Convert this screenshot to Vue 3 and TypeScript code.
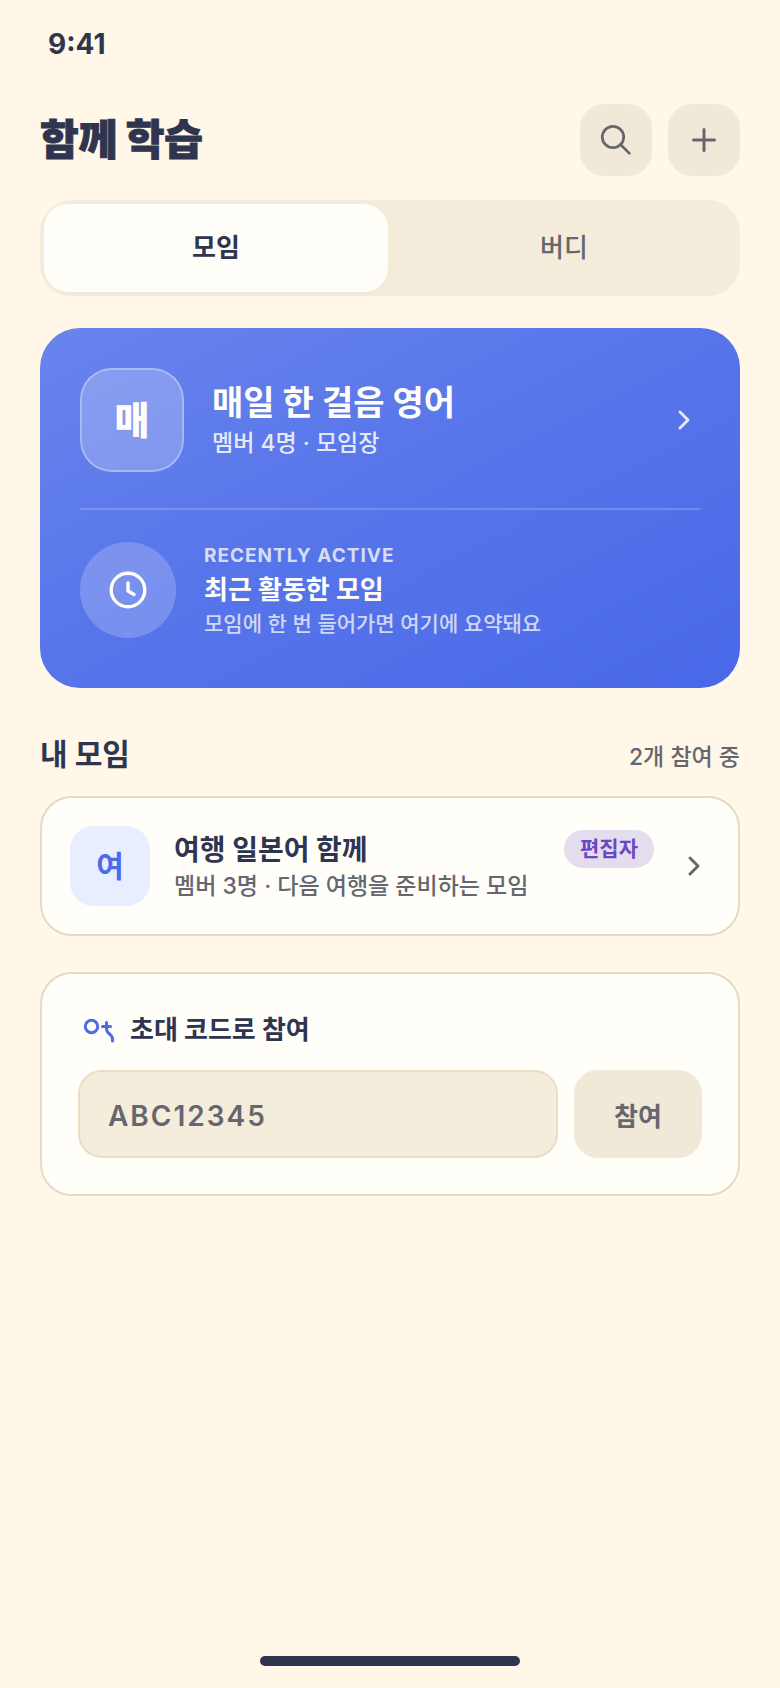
<script setup lang="ts">
import { ref } from 'vue'

type Tab = 'groups' | 'buddies'

interface Group {
  initial: string
  name: string
  detail: string
  role: string
}

const tabs: { id: Tab; label: string }[] = [
  { id: 'groups', label: '모임' },
  { id: 'buddies', label: '버디' },
]
const activeTab = ref<Tab>('groups')
const inviteCode = ref('')

const groups: Group[] = [
  { initial: '여', name: '여행 일본어 함께', detail: '멤버 3명 · 다음 여행을 준비하는 모임', role: '편집자' },
]
</script>

<template>
  <div class="screen">
    <div class="status"><time>9:41</time></div>

    <header class="header">
      <h1>함께 학습</h1>
      <div class="actions">
        <button type="button" class="icon-button" aria-label="검색">
          <svg width="32" height="32" viewBox="0 0 32 32">
            <circle cx="13" cy="13" r="10.7" />
            <path d="M20.8 20.8 29.4 29.4" />
          </svg>
        </button>
        <button type="button" class="icon-button" aria-label="추가">
          <svg class="plus" width="32" height="32" viewBox="0 0 32 32">
            <path d="M16 5.500v21M5.500 16h21" />
          </svg>
        </button>
      </div>
    </header>

    <main class="content">
      <div class="segment" role="tablist">
        <button
          v-for="tab in tabs"
          :key="tab.id"
          type="button"
          role="tab"
          class="tab"
          :class="{ active: activeTab === tab.id }"
          :aria-selected="activeTab === tab.id"
          @click="activeTab = tab.id"
        >
          {{ tab.label }}
        </button>
      </div>

      <section class="hero">
        <a class="hero-group" href="#">
          <span class="hero-avatar">매</span>
          <span class="hero-text">
            <strong class="hero-title">매일 한 걸음 영어</strong>
            <span class="hero-meta">멤버 4명 · 모임장</span>
          </span>
          <svg class="chevron" width="32" height="32" viewBox="0 0 24 24"><path d="m9 6 6 6-6 6" /></svg>
        </a>
        <div class="recent">
          <span class="recent-icon">
            <svg width="40" height="40" viewBox="0 0 40 40">
              <circle cx="20" cy="20" r="16.800" />
              <path d="M20 13v8l6 3.500" />
            </svg>
          </span>
          <div class="recent-text">
            <span class="eyebrow">RECENTLY ACTIVE</span>
            <strong class="recent-title">최근 활동한 모임</strong>
            <span class="recent-note">모임에 한 번 들어가면 여기에 요약돼요</span>
          </div>
        </div>
      </section>

      <section class="mine">
        <div class="section-head">
          <h2>내 모임</h2>
          <span>2개 참여 중</span>
        </div>
        <a v-for="group in groups" :key="group.name" class="card group" href="#">
          <span class="group-avatar">{{ group.initial }}</span>
          <span class="group-text">
            <strong class="group-name">{{ group.name }}</strong>
            <span class="group-detail">{{ group.detail }}</span>
          </span>
          <span class="chip">{{ group.role }}</span>
          <svg class="chevron" width="32" height="32" viewBox="0 0 24 24"><path d="m9 6 6 6-6 6" /></svg>
        </a>
      </section>

      <form class="card invite" @submit.prevent>
        <label class="invite-label" for="invite-code">
          <svg width="40" height="40" viewBox="0 0 40 40">
            <circle cx="13.500" cy="16.500" r="6.200" />
            <path d="M24.500 16.500h8M28.500 12.500v6c0 3 1 4 3 5.500c2 1.500 3 3 3 5v2" />
          </svg>
          초대 코드로 참여
        </label>
        <div class="invite-row">
          <input id="invite-code" v-model="inviteCode" type="text" placeholder="ABC12345" />
          <button type="submit">참여</button>
        </div>
      </form>
    </main>

    <div class="home-bar"></div>
  </div>
</template>

<style>
body {
  background: #fff7e8;
}
</style>

<style scoped>
.screen {
  box-sizing: border-box;
  min-height: 100vh;
  display: flex;
  flex-direction: column;
  padding: 24px 40px 22px;
  background: #fff7e8;
  color: #30354f;
  font-family: Inter, "Noto Sans CJK KR", sans-serif;
}

.screen *,
.screen *::before {
  box-sizing: border-box;
}

button,
input {
  font-family: inherit;
  border: 0;
  margin: 0;
}

button {
  padding: 0;
  cursor: pointer;
}

a {
  color: inherit;
  text-decoration: none;
}

svg {
  flex: none;
  fill: none;
  stroke: currentColor;
  stroke-width: 2.7;
  stroke-linecap: round;
  stroke-linejoin: round;
}

h1,
h2 {
  margin: 0;
}

.status {
  padding: 0 8px;
  font-size: 28px;
  line-height: 40px;
  font-weight: 700;
}

.status time {
  display: block;
}

.header {
  display: flex;
  align-items: center;
  justify-content: space-between;
  margin-top: 40px;
}

h1 {
  font-size: 42px;
  line-height: 56px;
  font-weight: 900;
  -webkit-text-stroke: 1px currentColor;
}

.actions {
  display: flex;
  gap: 16px;
}

.icon-button {
  display: grid;
  place-items: center;
  width: 72px;
  height: 72px;
  border-radius: 24px;
  background: #f0e9d7;
  color: #66666f;
}

.icon-button .plus {
  stroke-width: 3;
}

.content {
  display: flex;
  flex-direction: column;
  flex: 1;
  margin-top: 24px;
}

.segment {
  display: grid;
  grid-template-columns: 1fr 1fr;
  gap: 4px;
  padding: 4px;
  border-radius: 32px;
  background: #f5eddc;
}

.tab {
  height: 88px;
  border-radius: 24px;
  background: transparent;
  color: #66666f;
  font-size: 26px;
  line-height: 88px;
  font-weight: 500;
}

.tab.active {
  background: #fffdf8;
  color: #30354f;
  font-weight: 700;
  box-shadow: 0 2px 8px rgba(48, 53, 79, 0.03);
}

.hero {
  margin-top: 32px;
  padding: 40px;
  border-radius: 40px;
  background: linear-gradient(to bottom right, #6984ed, #5876ea 45%, #4968e8);
  color: #fffefa;
}

.hero-group {
  display: flex;
  align-items: center;
  gap: 28px;
  padding-bottom: 36px;
  border-bottom: 2px solid rgba(255, 255, 255, 0.18);
}

.hero-avatar {
  display: grid;
  place-items: center;
  width: 104px;
  height: 104px;
  border: 2px solid rgba(255, 255, 255, 0.3);
  border-radius: 32px;
  background: rgba(255, 255, 255, 0.22);
  font-size: 38px;
  line-height: 40px;
  font-weight: 900;
}

.hero-text,
.recent-text,
.group-text {
  display: flex;
  flex-direction: column;
  flex: 1;
  min-width: 0;
}

.hero-text {
  padding-top: 2px;
}

.hero-title {
  font-size: 34px;
  line-height: 44px;
  font-weight: 700;
}

.hero-meta {
  font-size: 23px;
  line-height: 36px;
  font-weight: 500;
  opacity: 0.84;
}

.hero .chevron {
  opacity: 0.84;
}

.chevron {
  stroke-width: 2.2;
}

.recent {
  display: flex;
  align-items: center;
  gap: 28px;
  padding: 30px 0 8px;
}

.recent-icon {
  display: grid;
  place-items: center;
  width: 96px;
  height: 96px;
  border-radius: 50%;
  background: rgba(255, 255, 255, 0.2);
}

.recent-icon svg {
  stroke-width: 3.4;
}

.eyebrow {
  font-size: 19px;
  line-height: 32px;
  font-weight: 700;
  letter-spacing: 1px;
  opacity: 0.76;
}

.recent-title {
  font-size: 26px;
  line-height: 36px;
  font-weight: 700;
}

.recent-note {
  font-size: 21px;
  line-height: 32px;
  font-weight: 500;
  opacity: 0.72;
}

.mine {
  margin-top: 44px;
}

.section-head {
  display: flex;
  align-items: baseline;
  justify-content: space-between;
  margin-bottom: 20px;
}

h2 {
  font-size: 30px;
  line-height: 44px;
  font-weight: 700;
}

.section-head span {
  color: #66666f;
  font-size: 23px;
  font-weight: 500;
}

.card {
  border: 2px solid #e4dac5;
  border-radius: 32px;
  background: #fffef9;
}

.group {
  display: flex;
  align-items: center;
  gap: 24px;
  padding: 28px;
}

.group-avatar {
  display: grid;
  place-items: center;
  width: 80px;
  height: 80px;
  border-radius: 24px;
  background: #e8edff;
  color: #4c6bec;
  font-size: 30px;
  line-height: 40px;
  font-weight: 700;
}

.group-text {
  padding-top: 4px;
}

.group-name {
  font-size: 28px;
  line-height: 36px;
  font-weight: 700;
}

.group-detail {
  color: #66666f;
  font-size: 23px;
  line-height: 36px;
  font-weight: 500;
}

.chip {
  align-self: flex-start;
  margin-top: 4px;
  padding: 0 16px;
  border-radius: 19px;
  background: #e3ddee;
  color: #6b47c6;
  font-size: 21px;
  line-height: 38px;
  font-weight: 700;
}

.group .chevron {
  color: #66666f;
}

.invite {
  margin-top: 36px;
  padding: 36px;
}

.invite-label {
  display: flex;
  align-items: center;
  gap: 12px;
  margin-bottom: 20px;
  font-size: 26px;
  line-height: 40px;
  font-weight: 700;
}

.invite-label svg {
  color: #4c6bec;
  stroke-width: 3;
}

.invite-row {
  display: flex;
  gap: 16px;
}

.invite input {
  flex: 1;
  min-width: 0;
  height: 88px;
  padding: 4px 28px 0;
  border: 2px solid #eadcc5;
  border-radius: 24px;
  background: #f5eddc;
  color: #30354f;
  font-size: 28px;
  font-weight: 600;
  letter-spacing: 2px;
}

.invite input::placeholder {
  color: #66666f;
  opacity: 1;
}

.invite button {
  width: 128px;
  border-radius: 24px;
  background: #f0e9d7;
  color: #66666f;
  font-size: 26px;
  font-weight: 700;
}

.home-bar {
  align-self: center;
  width: 260px;
  height: 10px;
  border-radius: 5px;
  background: #30354f;
}
</style>
